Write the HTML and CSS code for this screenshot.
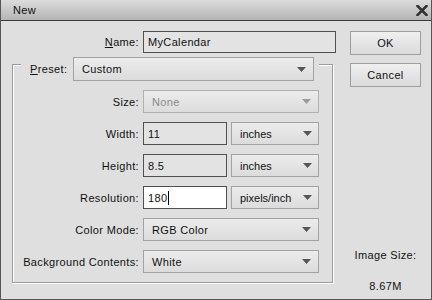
FILE: index.html
```html
<!DOCTYPE html>
<html>
<head>
<meta charset="utf-8">
<link rel="stylesheet" href="styles.css">
</head>
<body>
<div class="dialog">
  <div class="titlebar">
    <span class="title">New</span>
    <svg class="close" width="12" height="11" viewBox="0 0 12 11"><path d="M1.5 1 L10.5 10 M10.5 1 L1.5 10" stroke="#333" stroke-width="2.6" stroke-linecap="square"/></svg>
  </div>
  <div class="content">
    <div class="main">
      <div class="row name-row">
        <label class="lbl"><u>N</u>ame:</label>
        <div class="input name-input">MyCalendar</div>
      </div>
      <div class="frame-wrap">
        <div class="frame">
          <div class="preset-head">
            <label class="preset-lbl"><u>P</u>reset:</label>
            <div class="select preset-select"><span>Custom</span><svg class="arrow" width="9" height="5" viewBox="0 0 9 5"><path d="M0 0 H9 L4.5 5 Z" fill="#555"/></svg></div>
          </div>
          <div class="rows">
            <div class="row">
              <label class="lbl">Size:</label>
              <div class="select wide disabled"><span>None</span><svg class="arrow" width="9" height="5" viewBox="0 0 9 5"><path d="M0 0 H9 L4.5 5 Z" fill="#9a9a9a"/></svg></div>
            </div>
            <div class="row">
              <label class="lbl">Width:</label>
              <div class="input num">11</div>
              <div class="select unit"><span>inches</span><svg class="arrow" width="9" height="5" viewBox="0 0 9 5"><path d="M0 0 H9 L4.5 5 Z" fill="#555"/></svg></div>
            </div>
            <div class="row">
              <label class="lbl">Height:</label>
              <div class="input num">8.5</div>
              <div class="select unit"><span>inches</span><svg class="arrow" width="9" height="5" viewBox="0 0 9 5"><path d="M0 0 H9 L4.5 5 Z" fill="#555"/></svg></div>
            </div>
            <div class="row">
              <label class="lbl">Resolution:</label>
              <div class="input num active">180<span class="caret"></span></div>
              <div class="select unit"><span>pixels/inch</span><svg class="arrow" width="9" height="5" viewBox="0 0 9 5"><path d="M0 0 H9 L4.5 5 Z" fill="#555"/></svg></div>
            </div>
            <div class="row">
              <label class="lbl">Color Mode:</label>
              <div class="select wide"><span>RGB Color</span><svg class="arrow" width="9" height="5" viewBox="0 0 9 5"><path d="M0 0 H9 L4.5 5 Z" fill="#555"/></svg></div>
            </div>
            <div class="row">
              <label class="lbl">Background Contents:</label>
              <div class="select wide"><span>White</span><svg class="arrow" width="9" height="5" viewBox="0 0 9 5"><path d="M0 0 H9 L4.5 5 Z" fill="#555"/></svg></div>
            </div>
          </div>
        </div>
      </div>
    </div>
    <div class="side">
      <div class="btn">OK</div>
      <div class="btn">Cancel</div>
      <div class="spacer"></div>
      <div class="info">Image Size:</div>
      <div class="info size">8.67M</div>
    </div>
  </div>
</div>
</body>
</html>
```

FILE: styles.css
```css
* { box-sizing: border-box; }
html, body { margin: 0; padding: 0; }
body {
  font-family: "Liberation Sans", Arial, sans-serif;
  font-size: 11px;
  letter-spacing: 0.35px;
  color: #111;
  background: #dfdfdf;
}
.dialog {
  width: 432px;
  height: 300px;
  background: #dfdfdf;
  border-left: 1px solid #555;
  border-right: 1px solid #555;
  border-bottom: 1px solid #555;
  display: flex;
  flex-direction: column;
}
.titlebar {
  height: 21px;
  flex: none;
  border-bottom: 1px solid #3a3a3a;
  background: linear-gradient(#dcdcdc, #b4b4b4);
  display: flex;
  align-items: center;
  justify-content: space-between;
  padding: 0 3px 1px 12px;
}
.title { font-size: 11px; color: #111; }
.close { display: block; margin-top: 1px; }
.content {
  flex: 1;
  display: flex;
}
.main {
  width: 338px;
  flex: none;
  padding-top: 10px;
}
.row {
  display: flex;
  align-items: center;
  height: 23px;
}
.lbl {
  text-align: right;
  padding-right: 4px;
  white-space: nowrap;
}
.name-row { height: 22px; }
.name-row .lbl { width: 142px; }
.input {
  height: 100%;
  border: 1px solid #505050;
  background: #e3e3e3;
  display: flex;
  align-items: center;
  padding-left: 4px;
}
.name-input { width: 193px; }
.frame-wrap {
  padding-left: 11px;
  margin-top: 11px;
}
.frame {
  width: 321px;
  height: 219px;
  border: 1px solid #9c9c9c;
  box-shadow: inset 1px 1px 0 #fff, 1px 1px 0 #fff;
}
.preset-head {
  margin: -8px 0 0 8px;
  width: 298px;
  background: #dfdfdf;
  display: flex;
  align-items: center;
  height: 24px;
}
.preset-lbl { padding-left: 9px; width: 52px; }
.select {
  height: 100%;
  border: 1px solid #a2a2a2;
  background: linear-gradient(#ececec, #dcdcdc);
  display: flex;
  align-items: center;
  justify-content: space-between;
  padding: 0 7px 0 8px;
  white-space: nowrap;
}
.preset-select { width: 241px; }
.select .arrow { display: block; flex: none; }
.rows {
  margin-top: 9px;
  display: flex;
  flex-direction: column;
  gap: 9px;
}
.rows .lbl { width: 130px; }
.wide { width: 176px; }
.num { width: 84px; }
.unit { width: 88px; margin-left: 4px; padding-right: 6px; }
.unit span { letter-spacing: 0; }
.disabled { color: #8a8a8a; border-color: #b0b0b0; }
.active { background: #fff; }
.caret {
  display: inline-block;
  width: 1px;
  height: 14px;
  background: #000;
  margin-left: 1px;
}
.side {
  flex: 1;
  display: flex;
  flex-direction: column;
  align-items: center;
  padding: 10px 10px 6px 11px;
}
.btn {
  width: 71px;
  height: 24px;
  flex: none;
  border: 1px solid #9e9e9e;
  background: linear-gradient(#f0f0f0, #dadada);
  display: flex;
  align-items: center;
  justify-content: center;
  margin-bottom: 8px;
}
.spacer { flex: 1; }
.info { line-height: 13px; text-align: center; white-space: nowrap; }
.size { margin-top: 18px; }
```
